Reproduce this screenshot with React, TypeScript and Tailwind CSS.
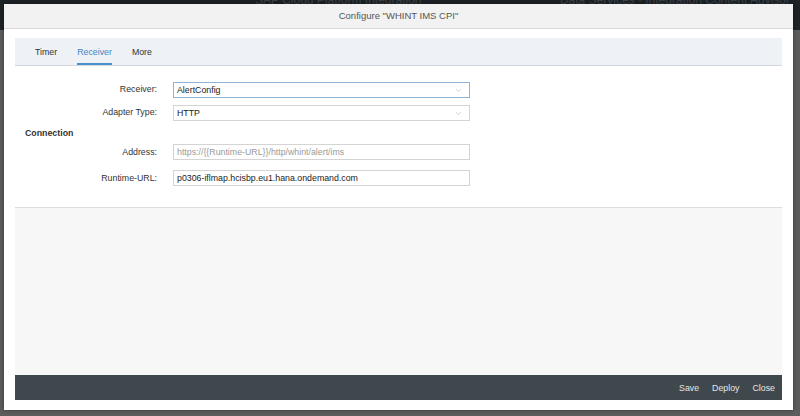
import { ChevronDown } from "lucide-react";

const font = { fontFamily: '"Liberation Sans", Arial, sans-serif' };

function Field({
  label,
  value,
  select,
  muted,
  focused,
}: {
  label: string;
  value: string;
  select?: boolean;
  muted?: boolean;
  focused?: boolean;
}) {
  return (
    <div className="flex items-center">
      <label className="w-[142px] text-right text-[8.8px] text-[#333]">{label}</label>
      <div
        className={
          "ml-[16px] flex h-[16px] w-[297px] items-center justify-between border bg-white pl-[3px] pr-[6px] text-[8.8px] " +
          (focused ? "border-[#8fb3d6]" : "border-[#d4d4d4]") +
          (muted ? " text-[#9a9a9a]" : " text-[#222]")
        }
      >
        <span className="leading-none">{value}</span>
        {select && <ChevronDown size={9} strokeWidth={1.2} className="text-[#9a9a9a]" />}
      </div>
    </div>
  );
}

export default function App() {
  return (
    <div className="relative h-[416px] w-[800px] overflow-hidden bg-[#5c5c5c]" style={font}>
      {/* dimmed page behind the dialog */}
      <div className="flex h-[30px] items-start justify-between bg-[#1d2226] pl-[255px] pr-[10px] text-[12px] leading-none text-[#3c4247]">
        <span className="-mt-[6px]">SAP Cloud Platform Integration</span>
        <span className="-mt-[6px]">Data Services · Integration Content Advisor</span>
      </div>

      <div className="absolute left-[4px] top-[4px] flex h-[406px] w-[789px] flex-col bg-white shadow-[0_0_4px_rgba(0,0,0,0.4)]">
        <div className="flex h-[25px] items-center justify-center border-b border-[#dadada] bg-[#f2f2f2] pt-[1px] text-[9.5px] text-[#555]">
          Configure "WHINT IMS CPI"
        </div>

        <div className="flex flex-1 flex-col px-[11px] pb-[10px] pt-[9px]">
          <div className="flex h-[28px] gap-[20px] border-b border-[#d3d8de] bg-[#eef1f6] pl-[20px] text-[8.8px] text-[#333]">
            <span className="flex items-center pt-[3px]">Timer</span>
            <span className="flex items-center border-b-2 border-[#4a90cf] pt-[4px] text-[#3f86c4]">Receiver</span>
            <span className="flex items-center pt-[3px]">More</span>
          </div>

          <div className="flex h-[142px] flex-col border-b border-[#dedede] bg-white pt-[16px]">
            <Field label="Receiver:" value="AlertConfig" select focused />
            <div className="mt-[7px]">
              <Field label="Adapter Type:" value="HTTP" select />
            </div>
            <div className="mt-[6px] pl-[10px] text-[8.8px] font-bold text-[#333]">Connection</div>
            <div className="mt-[4px]">
              <Field label="Address:" value="https://{{Runtime-URL}}/http/whint/alert/ims" muted />
            </div>
            <div className="mt-[10px]">
              <Field label="Runtime-URL:" value="p0306-iflmap.hcisbp.eu1.hana.ondemand.com" />
            </div>
          </div>

          <div className="flex-1 bg-[#f7f7f7]" />

          <div className="flex h-[25px] items-center justify-end gap-[13px] bg-[#3f484c] pr-[7px] pt-[2px] text-[8.8px] text-[#e6e6e6]">
            <span>Save</span>
            <span>Deploy</span>
            <span>Close</span>
          </div>
        </div>
      </div>
    </div>
  );
}
